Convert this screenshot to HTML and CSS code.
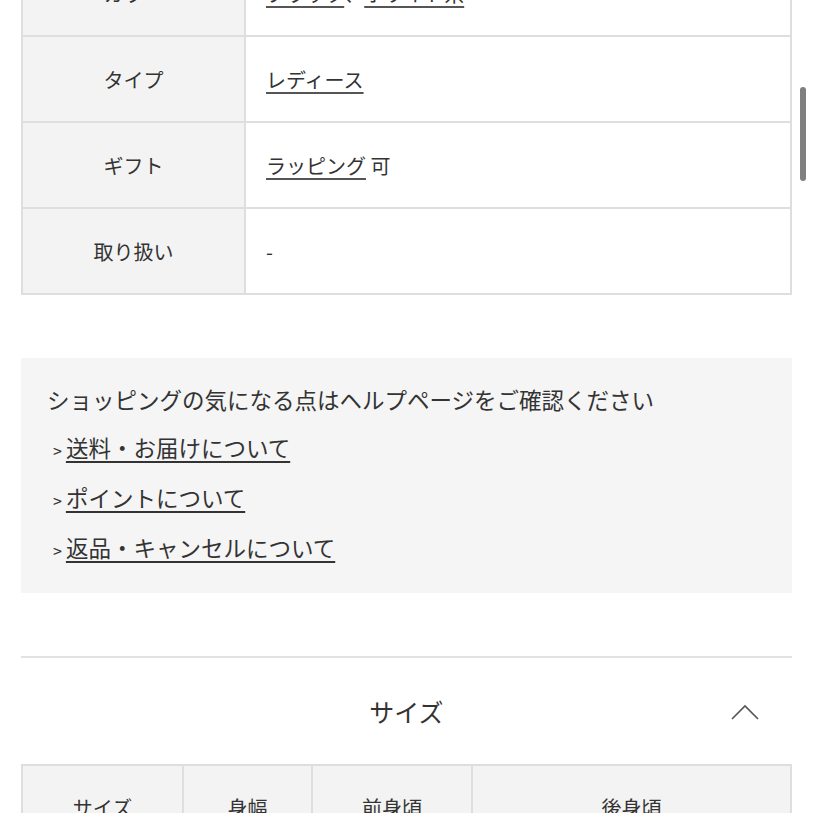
FILE: index.html
```html
<!DOCTYPE html>
<html lang="ja">
<head>
<meta charset="utf-8">
<link rel="stylesheet" href="styles.css">
</head>
<body>
<div class="page">
  <table class="spec">
    <tr>
      <th>カラー</th>
      <td><a class="lnk">ブラック</a>、<a class="lnk">ホワイト系</a></td>
    </tr>
    <tr>
      <th>タイプ</th>
      <td><a class="lnk">レディース </a></td>
    </tr>
    <tr>
      <th>ギフト</th>
      <td><a class="lnk">ラッピング</a> 可</td>
    </tr>
    <tr>
      <th>取り扱い</th>
      <td>-</td>
    </tr>
  </table>

  <section class="help">
    <p class="help-title">ショッピングの気になる点はヘルプページをご確認ください</p>
    <ul class="help-links">
      <li><span class="gt">&gt;</span><a class="lnk">送料・お届けについて</a></li>
      <li><span class="gt">&gt;</span><a class="lnk">ポイントについて</a></li>
      <li><span class="gt">&gt;</span><a class="lnk">返品・キャンセルについて</a></li>
    </ul>
  </section>

  <hr class="divider">

  <div class="acc-head">
    <span class="acc-title">サイズ</span>
    <svg class="chev" width="30" height="18" viewBox="0 0 30 18"><path d="M2 16 L15 3 L28 16" fill="none" stroke="#555" stroke-width="1.6"/></svg>
  </div>

  <table class="size">
    <tr>
      <th class="c1">サイズ</th>
      <th class="c2">身幅</th>
      <th class="c3">前身頃</th>
      <th class="c4">後身頃</th>
    </tr>
  </table>
</div>
<div class="scrollbar"></div>
</body>
</html>
```
FILE: styles.css
```css
html, body {
  margin: 0;
  padding: 0;
  background: #fff;
  overflow: hidden;
  height: 813px;
}
body {
  font-family: "Noto Sans CJK JP", "Noto Sans", sans-serif;
  color: #333;
}
.page {
  padding: 0 21px 0 21px;
}
.spec {
  width: 771px;
  border-collapse: collapse;
  margin-top: -51px;
}
.spec th, .spec td {
  border: 2px solid #dedede;
  height: 84px;
  font-size: 20px;
  font-weight: 400;
  padding: 0;
}
.spec th {
  width: 221px;
  background: #f3f3f3;
  text-align: center;
}
.spec td {
  background: #fff;
  padding-left: 20px;
  text-align: left;
}
.lnk {
  color: #333;
  text-decoration: underline;
  text-decoration-thickness: 2px;
  text-underline-offset: 4px;
}
.spec .lnk {
  text-decoration-thickness: 1.5px;
  text-decoration-color: #555;
}
.help {
  margin-top: 63px;
  background: #f5f5f5;
  padding: 26px 26px 28px 26px;
  height: 181px;
}
.help-title {
  margin: 0;
  font-size: 22.5px;
  line-height: 30px;
  white-space: nowrap;
}
.help-links {
  list-style: none;
  margin: 18px 0 0 0;
  padding: 0;
}
.help-links li {
  font-size: 22.5px;
  line-height: 30px;
  height: 30px;
  margin-bottom: 20px;
  display: flex;
  align-items: baseline;
}
.help-links .gt {
  font-size: 16px;
  margin: 0 4px 0 6px;
}
.divider {
  margin: 63px 0 0 0;
  border: 0;
  border-top: 2px solid #e2e2e2;
  height: 0;
}
.acc-head {
  position: relative;
  height: 106px;
  display: flex;
  align-items: center;
  justify-content: center;
}
.acc-title {
  font-size: 25px;
}
.chev {
  position: absolute;
  right: 32px;
  top: 45px;
}
.size {
  width: 771px;
  border-collapse: collapse;
}
.size th {
  border: 2px solid #dedede;
  background: #f3f3f3;
  height: 80px;
  font-size: 20px;
  font-weight: 400;
  text-align: center;
  vertical-align: middle;
}
.size .c1 { width: 157px; }
.size .c2 { width: 125px; }
.size .c3 { width: 156px; }
.scrollbar {
  position: absolute;
  left: 800px;
  top: 87px;
  width: 6px;
  height: 94px;
  border-radius: 3px;
  background: #7f7f7f;
}
```
